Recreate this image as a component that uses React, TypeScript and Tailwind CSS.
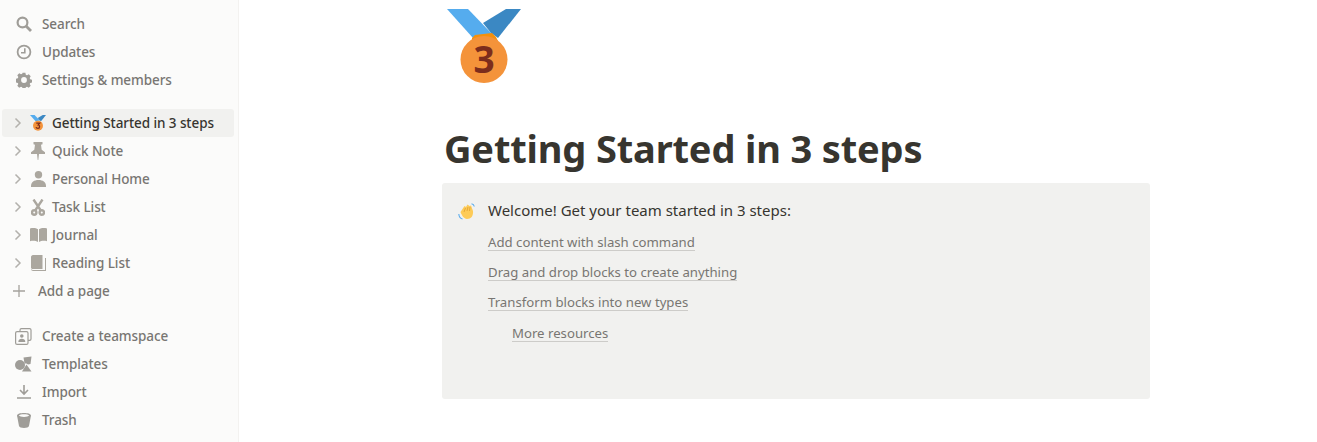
import React from "react";

const ic = "#9f9d98";

function Medal({ size }: { size: number }) {
  return (
    <svg width={size} height={size} viewBox="0 0 74 74" className="block">
      <polygon points="0,0 21,0 46,26 26,29" fill="#55acee" />
      <polygon points="36,14 59,0 74,0 51,29 44,24" fill="#3b88c3" />
      <polygon points="25,29 28,26 45,24 49,28 51,32 25,32" fill="#f4900c" />
      <circle cx="37" cy="50.500" r="23.500" fill="#f4933a" />
      <text x="37" y="64" textAnchor="middle" fontSize="37" fontWeight="700" fill="#7c2d1c" fontFamily="'Open Sans', sans-serif">3</text>
    </svg>
  );
}

function SmallMedal() {
  return (
    <svg width="16" height="16" viewBox="0 0 74 74" className="block">
      <polygon points="0,0 21,0 46,26 26,29" fill="#55acee" />
      <polygon points="36,14 59,0 74,0 51,29 44,24" fill="#3b88c3" />
      <circle cx="37" cy="50" r="23" fill="#f4933a" />
      <path d="M29 38 H45 L38 46 C46 47 47 62 37 62 C32 62 29 60 28 56" fill="none" stroke="#7c2d1c" strokeWidth="6" />
    </svg>
  );
}

const Search = () => (
  <svg width="16" height="16" viewBox="0 0 16 16" fill="none" stroke={ic} strokeWidth="2.200">
    <circle cx="6.500" cy="6.500" r="4.900" />
    <path d="M10 10 L15 15" strokeWidth="2.800" />
  </svg>
);
const Clock = () => (
  <svg width="16" height="16" viewBox="0 0 16 16" fill="none" stroke={ic} strokeWidth="1.800">
    <circle cx="8" cy="8" r="6.400" />
    <path d="M8.800 4.200 V8.800 H5" strokeWidth="1.600" />
  </svg>
);
const Gear = () => (
  <svg width="16" height="16" viewBox="0 0 16 16" fill={ic}>
    <path fillRule="evenodd" d="M6.600 1h2.800l.4 2 1.200.6 1.800-1 1.900 2-1 1.700.5 1.200 2 .5v2.700l-2 .5-.5 1.200 1 1.700-1.900 1.900-1.800-1-1.200.5-.4 2H6.600l-.4-2-1.200-.5-1.800 1-1.900-1.900 1-1.700-.5-1.200-2-.5V7l2-.5.5-1.200-1-1.700 1.900-2 1.800 1 1.200-.6zM8 5.400a2.900 2.900 0 1 0 0 5.800 2.900 2.900 0 0 0 0-5.800z" transform="translate(0 -.3)" />
  </svg>
);
const Chevron = () => (
  <svg width="8" height="12" viewBox="0 0 8 12" fill="none" stroke="#b3b1ac" strokeWidth="1.500">
    <path d="M1.500 1.500 L6 6 L1.500 10.500" />
  </svg>
);
const Pin = () => (
  <svg width="14" height="18" viewBox="0 0 14 18" fill="#aba79f">
    <path d="M2.500 0h9v2.200l-1.500.6.700 5L14 10.200V12H8l-.7 6h-.6L6 12H0v-1.800l3.300-2.400.7-5-1.500-.6z" />
  </svg>
);
const Person = () => (
  <svg width="15" height="16" viewBox="0 0 15 16" fill="#aba79f">
    <circle cx="7.500" cy="3.800" r="3.700" />
    <path d="M0 16c-.3-4.500 2.500-7 7.500-7s7.800 2.500 7.500 7z" />
  </svg>
);
const Scissors = () => (
  <svg width="14" height="17" viewBox="0 0 14 17" fill="none" stroke="#aba79f" strokeWidth="2.400">
    <path d="M2.500 .5 L9.500 11 M11.500 .5 L4.500 11" />
    <circle cx="3.200" cy="13.500" r="2.200" />
    <circle cx="10.800" cy="13.500" r="2.200" />
  </svg>
);
const Book = () => (
  <svg width="17" height="14" viewBox="0 0 17 14" fill="#aba79f">
    <path d="M0 .5c3-.7 6-.5 8 .8V14c-2-1.200-5-1.400-8-.8zM17 .5c-3-.7-6-.5-8 .8V14c2-1.200 5-1.400 8-.8z" />
  </svg>
);
const BookClosed = () => (
  <svg width="15" height="16" viewBox="0 0 15 16" fill="#aba79f">
    <path d="M0 2c0-1 .8-2 2-2h9.500v14H2c-1 0-2-.4-2-1.500z" />
    <path d="M0 14c0 1.200 1 2 2.200 2H15V3h-1v12H2.500c-1 0-1.600-.2-2.500-1z" />
  </svg>
);
const Plus = () => (
  <svg width="12" height="12" viewBox="0 0 12 12" stroke="#a5a29d" strokeWidth="1.300">
    <path d="M6 0v12M0 6h12" />
  </svg>
);
const Team = () => (
  <svg width="17" height="17" viewBox="0 0 17 17" fill="none" stroke={ic} strokeWidth="1.200">
    <path d="M5 3V2a1.400 1.400 0 0 1 1.400-1.400h8.200A1.400 1.400 0 0 1 16 2v9a1.400 1.400 0 0 1-1.400 1.400H13" />
    <rect x=".6" y="3.600" width="12.400" height="12.800" rx="1.500" />
    <circle cx="6.800" cy="8" r="1.800" fill={ic} stroke="none" />
    <path d="M3.300 14c0-2.300 1.500-3.300 3.500-3.300s3.500 1 3.500 3.300z" fill={ic} stroke="none" />
  </svg>
);
const Templates = () => (
  <svg width="17" height="16" viewBox="0 0 17 16" fill={ic}>
    <circle cx="5" cy="9" r="5" />
    <path d="M8.500 1.500 L16.500 .5 L15.500 8 L13 8.500 L11.500 7.500 L9.500 7.500 Z" />
    <path d="M11.500 8.500 L16.500 15.500 H7 L9.500 11.500 Z" />
  </svg>
);
const Download = () => (
  <svg width="14" height="14" viewBox="0 0 14 14" fill="none" stroke={ic} strokeWidth="1.600">
    <path d="M7 0 V8.500 M3 5 L7 9 L11 5 M0 13 H14" />
  </svg>
);
const Trash = () => (
  <svg width="14" height="15" viewBox="0 0 14 15" fill={ic}>
    <path d="M0 2.500C0 .8 3.500 0 7 0s7 .8 7 2.500c0 .4-.1 1-.3 1.500L12 13c-.2 1.200-2.500 2-5 2s-4.800-.8-5-2L.3 4C.1 3.500 0 2.900 0 2.500z" />
    <path d="M1.800 2.600C2.500 1.800 4.600 1.300 7 1.300s4.500.5 5.200 1.300C11.500 3.400 9.400 3.900 7 3.900S2.500 3.400 1.800 2.600z" fill="#fbfbfa" />
  </svg>
);

function TopRow({ icon, label }: { icon: React.ReactNode; label: string }) {
  return (
    <div className="flex h-7 items-center pl-[15px] text-[13.5px] font-medium tracking-[-0.08px] text-[#787672]">
      <div className="flex w-[17px] justify-center">{icon}</div>
      <span className="ml-[10px]">{label}</span>
    </div>
  );
}

function PageRow({ icon, label, active }: { icon: React.ReactNode; label: string; active?: boolean }) {
  return (
    <div className={`mx-[2px] flex h-7 w-[232px] items-center rounded-[3px] pl-[12px] text-[13.5px] font-medium tracking-[-0.08px] ${active ? "bg-[#f1f1ef] text-[#37352f]" : "text-[#787672]"}`}>
      <div className="flex w-[8px] justify-center"><Chevron /></div>
      <div className="ml-[7px] flex w-[18px] justify-center">{icon}</div>
      <span className="ml-[5px]">{label}</span>
    </div>
  );
}

function Link({ children, cls }: { children: React.ReactNode; cls?: string }) {
  return (
    <div className={`flex h-[30px] items-center ${cls ?? ""}`}>
      <span className="border-b border-[#cdccc9] pb-px pt-[3px] text-[13.2px] leading-[14px] text-[#787672]">{children}</span>
    </div>
  );
}

export default function App() {
  return (
    <div className="flex h-[442px] w-[1317px] overflow-hidden bg-white font-['Noto_Sans','Open_Sans',sans-serif]">
      <aside className="w-[239px] shrink-0 border-r border-[#f3f2f0] bg-[#fbfbfa] pt-[10px]">
        <TopRow icon={<Search />} label="Search" />
        <TopRow icon={<Clock />} label="Updates" />
        <TopRow icon={<Gear />} label="Settings & members" />
        <div className="mt-[15px]">
          <PageRow icon={<SmallMedal />} label="Getting Started in 3 steps" active />
          <PageRow icon={<Pin />} label="Quick Note" />
          <PageRow icon={<Person />} label="Personal Home" />
          <PageRow icon={<Scissors />} label="Task List" />
          <PageRow icon={<Book />} label="Journal" />
          <PageRow icon={<BookClosed />} label="Reading List" />
          <div className="flex h-7 items-center pl-[13px] text-[13.5px] font-medium tracking-[-0.08px] text-[#787672]">
            <Plus />
            <span className="ml-[13px]">Add a page</span>
          </div>
        </div>
        <div className="mt-[17px]">
          <TopRow icon={<Team />} label="Create a teamspace" />
          <TopRow icon={<Templates />} label="Templates" />
          <TopRow icon={<Download />} label="Import" />
          <TopRow icon={<Trash />} label="Trash" />
        </div>
      </aside>
      <main className="min-w-0 flex-1 pl-[203px]">
        <div className="pl-[5px] pt-[9px]">
          <Medal size={74} />
        </div>
        <h1 className="mb-[7px] mt-[37px] pl-[2px] text-[38px] font-bold leading-[56px] tracking-[-0.15px] text-[#37352f]">Getting Started in 3 steps</h1>
        <div className="h-[216px] w-[708px] rounded-[3px] bg-[#f1f1ef] pl-[16px] pt-[16px]">
          <div className="flex h-6 items-center">
            <span className="w-[30px] text-[17px] leading-6">
              <svg width="17" height="17" viewBox="0 0 17 17">
                <path d="M2.500 9 L6.500 3 L8 4 L9.500 1.500 L11.500 3 L13 2.500 L15 8 C15.500 13 13 16 9 16 C6 16 3.500 12 2.500 9 Z" fill="#fdcb58" />
                <path d="M7.500 5 L6 9 M10 4 L9 8 M12 4 L11.500 8" stroke="#e0a030" strokeWidth="0.800" fill="none" />
                <path d="M.8 11 C1 13.500 2.500 15.500 4.500 16 M13.500 .8 C15 1 16 2 16.300 3.500" stroke="#5dadec" strokeWidth="1.100" fill="none" />
              </svg>
            </span>
            <span className="mb-[2px] text-[15px] text-[#37352f]">Welcome! Get your team started in 3 steps:</span>
          </div>
          <div className="mt-[3px] pl-[30px]">
            <Link>Add content with slash command</Link>
            <Link>Drag and drop blocks to create anything</Link>
            <Link>Transform blocks into new types</Link>
            <Link cls="ml-[24px] mt-px">More resources</Link>
          </div>
        </div>
      </main>
    </div>
  );
}
